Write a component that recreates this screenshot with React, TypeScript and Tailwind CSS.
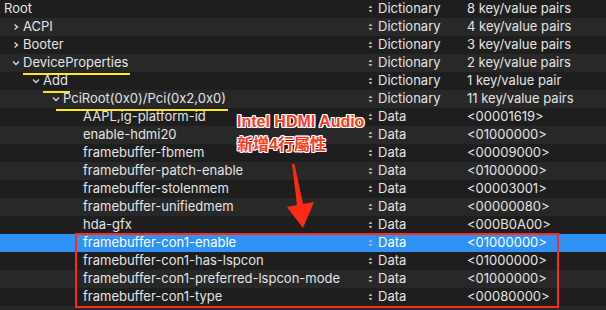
import React from 'react';

type Row = {
  key: string;
  level: number;
  chevron?: 'right' | 'down';
  type: string;
  value: string;
  underline?: boolean;
};

const rows: Row[] = [
  { key: 'Root', level: 0, type: 'Dictionary', value: '8 key/value pairs' },
  { key: 'ACPI', level: 1, chevron: 'right', type: 'Dictionary', value: '4 key/value pairs' },
  { key: 'Booter', level: 1, chevron: 'right', type: 'Dictionary', value: '3 key/value pairs' },
  { key: 'DeviceProperties', level: 1, chevron: 'down', type: 'Dictionary', value: '2 key/value pairs', underline: true },
  { key: 'Add', level: 2, chevron: 'down', type: 'Dictionary', value: '1 key/value pair', underline: true },
  { key: 'PciRoot(0x0)/Pci(0x2,0x0)', level: 3, chevron: 'down', type: 'Dictionary', value: '11 key/value pairs', underline: true },
  { key: 'AAPL,ig-platform-id', level: 4, type: 'Data', value: '<00001619>' },
  { key: 'enable-hdmi20', level: 4, type: 'Data', value: '<01000000>' },
  { key: 'framebuffer-fbmem', level: 4, type: 'Data', value: '<00009000>' },
  { key: 'framebuffer-patch-enable', level: 4, type: 'Data', value: '<01000000>' },
  { key: 'framebuffer-stolenmem', level: 4, type: 'Data', value: '<00003001>' },
  { key: 'framebuffer-unifiedmem', level: 4, type: 'Data', value: '<00000080>' },
  { key: 'hda-gfx', level: 4, type: 'Data', value: '<000B0A00>' },
  { key: 'framebuffer-con1-enable', level: 4, type: 'Data', value: '<01000000>' },
  { key: 'framebuffer-con1-has-lspcon', level: 4, type: 'Data', value: '<01000000>' },
  { key: 'framebuffer-con1-preferred-lspcon-mode', level: 4, type: 'Data', value: '<01000000>' },
  { key: 'framebuffer-con1-type', level: 4, type: 'Data', value: '<00080000>' },
  { key: '', level: 0, type: '', value: '' },
];

const indentClass = ['pl-[4px]', 'pl-[12px]', 'pl-[32px]', 'pl-[52px]', 'pl-[83px]'];

const Chevron: React.FC<{ dir: 'right' | 'down' }> = ({ dir }) => (
  <svg width="8" height="8" viewBox="0 0 8 8" className="mr-[3px] shrink-0">
    {dir === 'right' ? (
      <path d="M2.5 1.5 L5.5 4 L2.5 6.5" fill="none" stroke="#d8d8d8" strokeWidth="1.4" />
    ) : (
      <path d="M1 2.5 L4 5.5 L7 2.5" fill="none" stroke="#d8d8d8" strokeWidth="1.4" />
    )}
  </svg>
);

const Stepper: React.FC = () => (
  <svg width="5" height="8" viewBox="0 0 5 8" className="mr-[5px] shrink-0">
    <path d="M2.5 0.5 L4.5 3 L0.5 3 Z" fill="#b8b8b8" />
    <path d="M2.5 7.5 L4.5 5 L0.5 5 Z" fill="#b8b8b8" />
  </svg>
);

export default function App() {
  return (
    <div
      className="relative w-[606px] h-[310px] overflow-hidden bg-[#1e1e1e] text-[13px] text-[#e4e4e4]"
      style={{ fontFamily: 'Inter, "Noto Sans CJK TC", sans-serif' }}
    >
      {rows.map((r, i) => {
        const selected = i === 13;
        const bg = selected ? 'bg-[#2f92f4] text-white' : i % 2 === 1 ? 'bg-[#282828]' : 'bg-[#1e1e1e]';
        return (
          <div key={i} className={`flex h-[18px] items-center ${bg}`}>
            <div className={`flex w-[368px] items-center ${indentClass[r.level]}`}>
              {r.chevron && <Chevron dir={r.chevron} />}
              <span className={r.underline ? 'relative' : ''}>
                {r.key}
                {r.underline && (
                  <span
                    className={`absolute right-[-2px] bottom-[-2px] h-[2px] bg-[#ffe81a] ${
                      r.level === 3 ? 'left-[-7px]' : 'left-0'
                    }`}
                  />
                )}
              </span>
            </div>
            <div className="flex w-[99px] items-center">
              {r.type && <Stepper />}
              <span>{r.type}</span>
            </div>
            <div>{r.value}</div>
          </div>
        );
      })}

      {/* annotation */}
      <div
        className="absolute left-[237px] top-[110px] text-[16px] font-bold leading-[23px] text-[#ff3a1e]"
        style={{
          fontFamily: '"Liberation Sans", "Noto Sans CJK TC", sans-serif',
          textShadow:
            '1px 0 0 #fff, -1px 0 0 #fff, 0 1px 0 #fff, 0 -1px 0 #fff, 1px 1px 0 #fff, -1px -1px 0 #fff, 1px -1px 0 #fff, -1px 1px 0 #fff',
        }}
      >
        <div>Intel HDMI Audio</div>
        <div>新增4行屬性</div>
      </div>

      <svg className="absolute left-[284px] top-[162px]" width="34" height="70" viewBox="0 0 34 70">
        <path d="M8 2 L10.5 2 L19 42 L30 40 L19 66 L3 45 L13 43 Z" fill="#ff2a14" />
      </svg>

      <div className="absolute left-[75px] top-[233px] w-[484px] h-[75px] border-2 border-[#ff2a18]" />
    </div>
  );
}
